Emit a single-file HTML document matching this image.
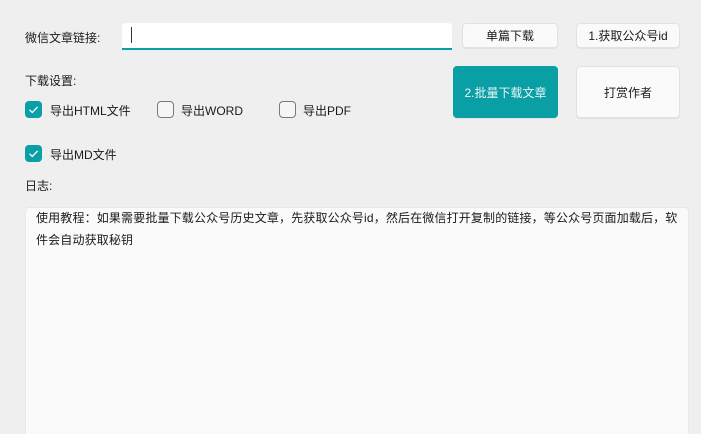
<!DOCTYPE html>
<html><head><meta charset="utf-8"><style>
html,body{margin:0;width:701px;height:434px;overflow:hidden}
body{background:#efefef;font-family:"Liberation Sans","Noto Sans CJK SC",sans-serif;font-size:12px;color:#1a1a1a;position:relative}
.a{position:absolute}
.btn{position:absolute;background:#fafafa;border:1px solid #e2e2e2;border-radius:4px;box-sizing:border-box;display:flex;align-items:center;justify-content:center;font-size:12px;box-shadow:0 1px 1px rgba(0,0,0,.06)}
.cb{position:absolute;width:17px;height:17px;box-sizing:border-box;border-radius:4px}
.on{background:#0a9fa5}
.off{border:1px solid #7a7a7a;background:#f5f5f5}
</style></head><body>
<div class="a" style="left:25px;top:29px">微信文章链接:</div>
<div class="a" style="left:122px;top:23px;width:330px;height:27px;background:#fff;border-radius:4px 4px 0 0;border-bottom:2px solid #0a9fa5;box-sizing:border-box"></div>
<div class="a" style="left:131px;top:27px;width:1px;height:16px;background:#333"></div>
<div class="btn" style="left:462px;top:23px;width:96px;height:25px">单篇下载</div>
<div class="btn" style="left:576px;top:23px;width:104px;height:25px">1.获取公众号id</div>
<div class="btn" style="left:453px;top:66px;width:105px;height:52px;background:#0a9fa5;border-color:#0a9fa5;color:#e8f6f6">2.批量下载文章</div>
<div class="btn" style="left:576px;top:66px;width:104px;height:52px">打赏作者</div>
<div class="a" style="left:25px;top:72px">下载设置:</div>
<div class="cb on" style="left:25px;top:101px"><svg width="17" height="17"><path d="M4.5 8.8l2.8 2.7 5.3-5.6" fill="none" stroke="#fff" stroke-width="1.3"/></svg></div>
<div class="a" style="left:50px;top:102px">导出HTML文件</div>
<div class="cb off" style="left:157px;top:101px"></div>
<div class="a" style="left:181px;top:102px">导出WORD</div>
<div class="cb off" style="left:279px;top:101px"></div>
<div class="a" style="left:303px;top:102px">导出PDF</div>
<div class="cb on" style="left:25px;top:145px"><svg width="17" height="17"><path d="M4.5 8.8l2.8 2.7 5.3-5.6" fill="none" stroke="#fff" stroke-width="1.3"/></svg></div>
<div class="a" style="left:50px;top:146px">导出MD文件</div>
<div class="a" style="left:25px;top:177px">日志:</div>
<div class="a" style="left:25px;top:207px;width:664px;height:240px;background:#fafafa;border-radius:4px;border:1px solid #e8e8e8;box-sizing:border-box"></div>
<div class="a" style="left:36px;top:207px;width:648px;line-height:22px;font-size:12px;letter-spacing:0.15px">使用教程：如果需要批量下载公众号历史文章，先获取公众号id，然后在微信打开复制的链接，等公众号页面加载后，软件会自动获取秘钥</div>
</body></html>
